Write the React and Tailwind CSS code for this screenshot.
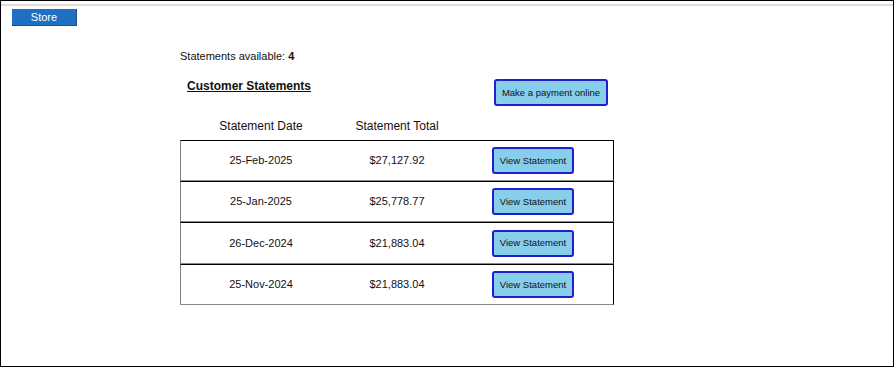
import React from "react";

const statements = [
  { date: "25-Feb-2025", total: "$27,127.92", h: "h-[41px]" },
  { date: "25-Jan-2025", total: "$25,778.77", h: "h-[41px]" },
  { date: "26-Dec-2024", total: "$21,883.04", h: "h-[42px]" },
  { date: "25-Nov-2024", total: "$21,883.04", h: "h-[41px]" },
];

function BlueButton({ children, className = "" }) {
  return (
    <button
      className={`h-[27px] bg-[#87ceeb] border-2 border-[#1f1fd0] rounded-[3px] text-[9.5px] text-[#111] leading-none ${className}`}
    >
      {children}
    </button>
  );
}

export default function App() {
  return (
    <div className="w-[894px] h-[367px] border border-black bg-white text-[#111] font-['Liberation_Sans',Arial,sans-serif]">
      <div className="mt-[3px] h-[2px] bg-[#dedede]" />
      <div className="flex pl-[11px] pt-[3px]">
        <button className="w-[65px] h-[17px] bg-[#1f70c2] border-r border-b border-[#15508c] text-white text-[11px] leading-none">
          Store
        </button>
      </div>

      <div className="ml-[179px] w-[434px]">
        <p className="mt-[24px] text-[11px] leading-[13px]">
          Statements available: <span className="font-bold">4</span>
        </p>

        <div className="mt-[16px] grid grid-cols-[314px_auto] items-start">
          <h2 className="pl-[7px] text-[12px] leading-[14px] font-bold underline">
            Customer Statements
          </h2>
          <BlueButton className="w-[114px]">Make a payment online</BlueButton>
        </div>

        <div className="mt-[13px] grid grid-cols-[160px_112px] pl-px text-[12px] leading-[14px]">
          <div className="text-center">Statement Date</div>
          <div className="text-center">Statement Total</div>
        </div>

        <div className="mt-[7px]">
          {statements.map((s) => (
            <div
              key={s.date}
              className={`${s.h} grid grid-cols-[160px_112px_1fr] items-center border-t border-t-black border-r border-r-black border-l border-l-[#808080] border-b border-b-[#8a8a8a] text-[11px]`}
            >
              <div className="text-center">{s.date}</div>
              <div className="text-center">{s.total}</div>
              <div className="pl-[39px] flex items-center">
                <BlueButton className="w-[82px]">View Statement</BlueButton>
              </div>
            </div>
          ))}
        </div>
      </div>
    </div>
  );
}
